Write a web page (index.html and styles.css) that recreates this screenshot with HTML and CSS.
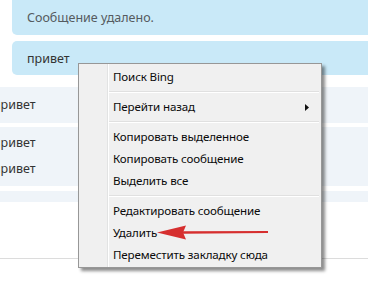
FILE: index.html
```html
<!DOCTYPE html>
<html lang="ru">
<head>
<meta charset="utf-8">
<link rel="stylesheet" href="styles.css">
</head>
<body>
<div class="chat">
  <div class="bubble bubble-first"><span class="deleted">Сообщение удалено.</span></div>
  <div class="bubble bubble-second">привет</div>
  <div class="row row-single"><span class="clip">привет</span></div>
  <div class="row row-double"><span class="clip">привет</span><span class="clip">привет</span></div>
  <div class="row row-partial"></div>
  <div class="divider"></div>
</div>

<div class="menu">
  <div class="item">Поиск Bing</div>
  <div class="sep"></div>
  <div class="item item-sub">Перейти назад
    <svg class="sub-arrow" width="4" height="7" viewBox="0 0 4 7"><polygon points="0,0 4,3.5 0,7" fill="#111"/></svg>
  </div>
  <div class="sep"></div>
  <div class="item">Копировать выделенное</div>
  <div class="item">Копировать сообщение</div>
  <div class="item">Выделить все</div>
  <div class="sep"></div>
  <div class="item">Редактировать сообщение</div>
  <div class="item">Удалить</div>
  <div class="item">Переместить закладку сюда</div>
</div>

<svg class="pointer" width="116" height="20" viewBox="0 0 116 20">
  <polygon points="2,9.5 31,2.5 28,9.5 31,16.5" fill="#d62f2f"/>
  <polygon points="28,8.3 113,8 113,10 28,10.7" fill="#d62f2f"/>
</svg>
</body>
</html>
```

FILE: styles.css
```css
html, body {
  margin: 0;
  padding: 0;
}

body {
  width: 368px;
  height: 282px;
  overflow: hidden;
  background: #ffffff;
  font-family: "Noto Sans", "Open Sans", sans-serif;
  color: #333333;
}

.chat {
  display: flex;
  flex-direction: column;
}

.bubble {
  margin-left: 12px;
  padding-left: 15px;
  background: #c9e9f8;
  display: flex;
  align-items: center;
  font-size: 12.5px;
}

.bubble-first {
  height: 35px;
  border-radius: 0 0 0 5px;
}

.deleted {
  color: #555b60;
}

.bubble-second {
  margin-top: 6px;
  height: 34px;
  border-radius: 5px 0 0 5px;
}

.row {
  background: #eff4f9;
  display: flex;
  flex-direction: column;
  font-size: 12.5px;
}

.clip {
  margin-left: -7px;
  line-height: 26px;
}

.row-single {
  margin-top: 12px;
  height: 36px;
  justify-content: center;
}

.row-double {
  margin-top: 4px;
  padding: 3px 0 4px;
}

.row-partial {
  margin-top: 5px;
  height: 11px;
}

.divider {
  margin-top: 56px;
  height: 1px;
  background: #dcdcdc;
}

.menu {
  position: absolute;
  left: 78px;
  top: 63px;
  width: 244px;
  height: 205px;
  box-sizing: border-box;
  border: 1px solid #979797;
  padding: 2px 2px 2px 0;
  background: linear-gradient(to right, #f0f0f0 28px, #e2e3e3 28px, #e2e3e3 29px, #ffffff 29px, #ffffff 30px, #f0f0f0 30px);
  box-shadow: 3px 3px 3px rgba(0, 0, 0, 0.45);
  font-size: 11.6px;
  letter-spacing: -0.15px;
  color: #0a0a0a;
}

.item {
  height: 22px;
  line-height: 22px;
  padding-left: 34px;
  white-space: nowrap;
}

.item-sub {
  display: flex;
  justify-content: space-between;
  align-items: center;
  padding-right: 10px;
}

.sub-arrow {
  display: block;
}

.sep {
  height: 8px;
  margin-left: 30px;
  box-sizing: border-box;
  padding-top: 3px;
}

.sep::before {
  content: "";
  display: block;
  height: 1px;
  background: #e0e0e0;
  border-bottom: 1px solid #ffffff;
}

.pointer {
  position: absolute;
  left: 155px;
  top: 223px;
}
```
